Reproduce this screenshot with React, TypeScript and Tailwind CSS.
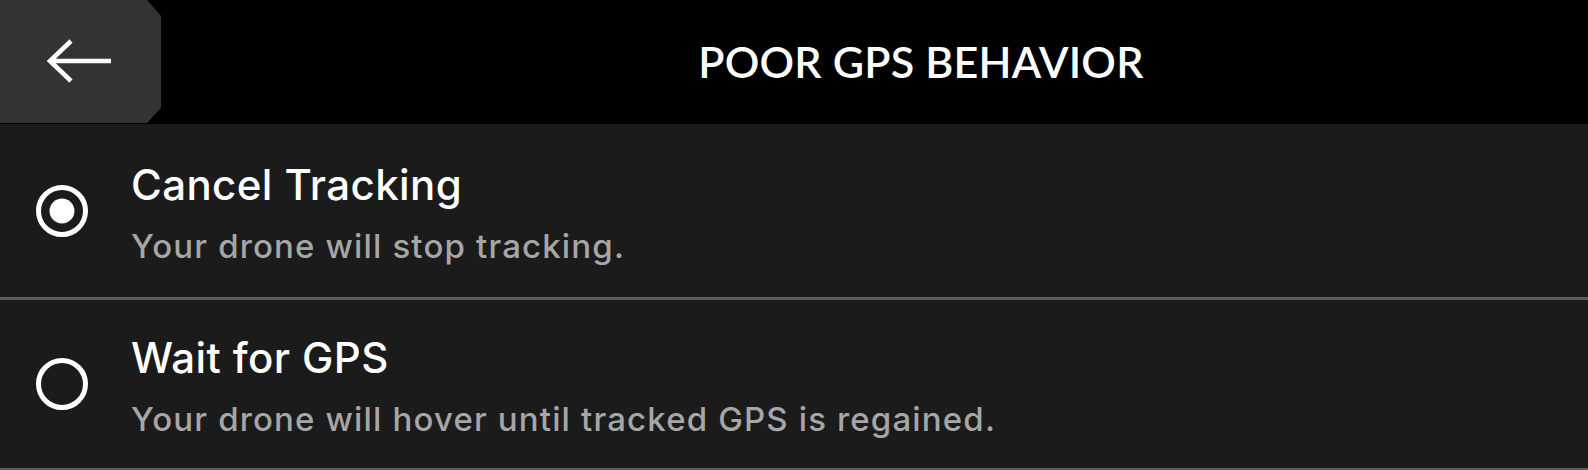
import { useState } from "react";

const options = [
  { id: "cancel", label: "Cancel Tracking", hint: "Your drone will stop tracking.", h: "h-[176px]" },
  { id: "wait", label: "Wait for GPS", hint: "Your drone will hover until tracked GPS is regained.", h: "h-[171px]" },
];

const Radio = ({ checked }: { checked: boolean }) => (
  <svg width="52" height="52" viewBox="0 0 52 52" className="shrink-0">
    <circle cx="26" cy="26" r="23.5" fill="none" stroke="white" strokeWidth="5" />
    {checked && <circle cx="26" cy="26" r="12.5" fill="white" />}
  </svg>
);

export default function App() {
  const [selected, setSelected] = useState("cancel");

  return (
    <div className="w-[1588px] h-[470px] overflow-hidden bg-black font-['Inter',sans-serif] text-white">
      {/* Header */}
      <div className="flex h-[124px]">
        <button className="w-[161px] h-[123px] shrink-0 bg-[#333333] [clip-path:polygon(0_0,147px_0,161px_16px,161px_108px,147px_123px,0_123px)]">
          <svg width="161" height="123" viewBox="0 0 161 123">
            <path d="M111 61H50M71 41L50 61L71 81" fill="none" stroke="white" strokeWidth="4.5" />
          </svg>
        </button>
        <div className="flex-1 flex items-center justify-center pl-[93px]">
          <h1 className="font-['Lato',sans-serif] text-[43px] leading-[52px] font-semibold tracking-[0.2px]">POOR GPS BEHAVIOR</h1>
        </div>
      </div>

      {/* Options */}
      <div className="bg-[#1b1b1b]">
        {options.map((o) => (
          <div
            key={o.id}
            onClick={() => setSelected(o.id)}
            className={`flex items-center ${o.h} border-b-[3px] border-[#5c5c5c] pl-[36px] cursor-pointer`}
          >
            <Radio checked={selected === o.id} />
            <div className="ml-[43px] flex flex-col gap-[15px] pt-[3px]">
              <div className="text-[42px] leading-[52px] font-medium tracking-[0.4px]">{o.label}</div>
              <div className="text-[33px] leading-[40px] text-[#a6a6a6] font-medium tracking-[1.15px]">{o.hint}</div>
            </div>
          </div>
        ))}
      </div>
    </div>
  );
}
